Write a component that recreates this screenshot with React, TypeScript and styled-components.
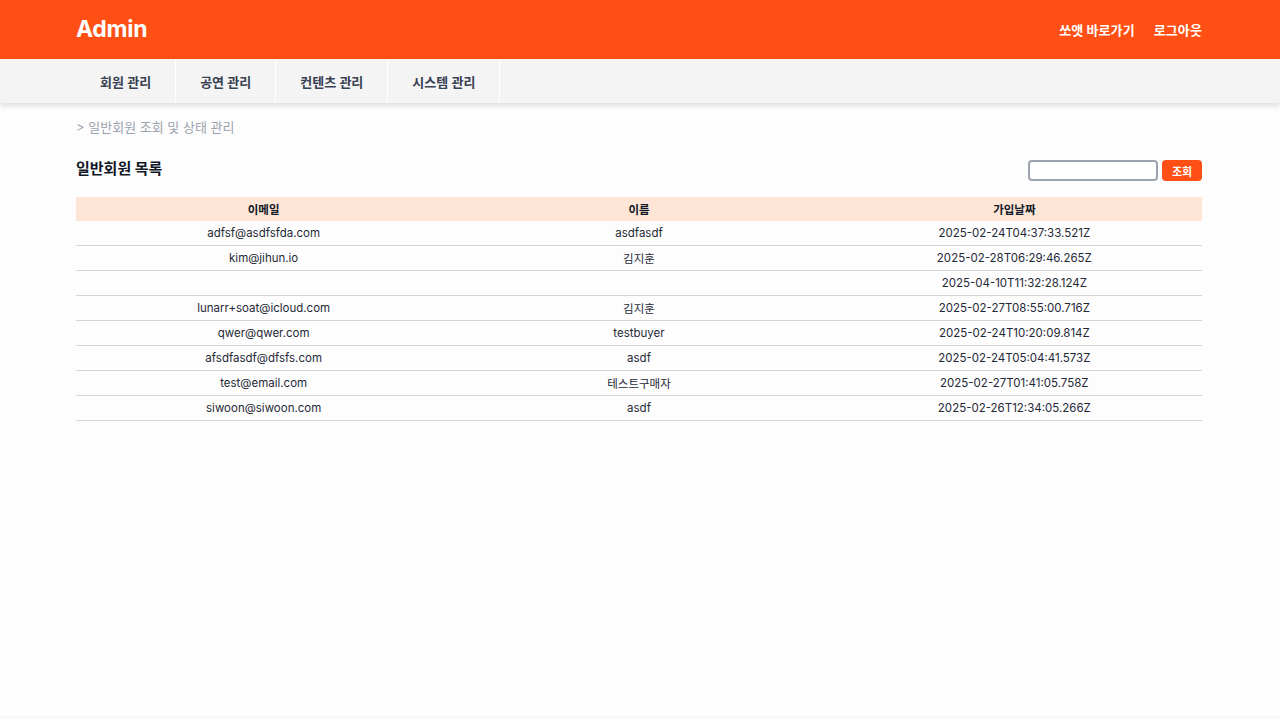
import React from "react"
import styled, { createGlobalStyle } from "styled-components"

const GlobalStyle = createGlobalStyle`
  html, body {
    margin: 0;
    padding: 0;
    background: #fdfdfd;
    font-family: Inter, "Noto Sans CJK KR", sans-serif;
    color: #111827;
  }
  * {
    box-sizing: border-box;
  }
`

const Page = styled.div`
  min-height: 718px;
  background: #fdfdfd;
  border-bottom: 2px solid #f5f8fb;
`

const Header = styled.header`
  height: 59px;
  background: #ff4f14;
`

const Container = styled.div`
  width: 1126px;
  margin: 0 78px 0 76px;
`

const HeaderInner = styled(Container)`
  height: 100%;
  display: flex;
  align-items: center;
  justify-content: space-between;
`

const Logo = styled.h1`
  margin: 0;
  font-size: 23px;
  font-weight: 700;
  color: #fff;
  letter-spacing: -0.3px;
  position: relative;
  top: -1px;
`

const HeaderLinks = styled.div`
  display: flex;
  gap: 19px;
`

const HeaderLink = styled.a`
  font-size: 13px;
  font-weight: 700;
  color: #fff;
  letter-spacing: 0.1px;
  text-decoration: none;
`

const NavBar = styled.nav`
  height: 44px;
  background: #f4f4f4;
  box-shadow: 0 3px 5px rgba(0, 0, 0, 0.12);
`

const NavList = styled(Container)`
  display: flex;
  height: 100%;
`

const NavItem = styled.a`
  display: flex;
  align-items: center;
  padding: 0 24px;
  height: 100%;
  font-size: 13px;
  font-weight: 600;
  color: #374151;
  border-right: 1px solid #ffffff;
  text-decoration: none;
`

const Main = styled(Container)`
  padding-top: 14px;
`

const Breadcrumb = styled.p`
  margin: 0;
  font-size: 13px;
  line-height: 20px;
  color: #9ca3af;
`

const TitleRow = styled.div`
  display: flex;
  align-items: center;
  justify-content: space-between;
  margin-top: 23px;
`

const Title = styled.h2`
  margin: 0;
  font-size: 15px;
  font-weight: 700;
  color: #111827;
  line-height: 18px;
  position: relative;
  top: -2px;
`

const Search = styled.div`
  display: flex;
  gap: 4px;
`

const SearchInput = styled.input`
  width: 130px;
  height: 21px;
  border: 2px solid #9ca3af;
  border-radius: 4px;
  background: #fff;
  padding: 0 4px;
  font-size: 12px;
  outline: none;
`

const SearchButton = styled.button`
  width: 40px;
  height: 21px;
  border: none;
  border-radius: 4px;
  background: #ff4f14;
  color: #fff;
  font-family: inherit;
  font-size: 11px;
  font-weight: 600;
  padding: 0;
`

const Table = styled.table`
  width: 100%;
  margin-top: 16px;
  border-collapse: separate;
  border-spacing: 0;
  table-layout: fixed;
  font-size: 11.5px;
`

const HeadCell = styled.th`
  height: 24px;
  background: #fee5d5;
  font-weight: 700;
  color: #111827;
  text-align: center;
  padding: 0;
`

const Cell = styled.td`
  height: 25px;
  text-align: center;
  color: #1f2937;
  padding: 0;
  border-bottom: 1px solid #d1d5db;
`

const members = [
  { email: "adfsf@asdfsfda.com", name: "asdfasdf", joined: "2025-02-24T04:37:33.521Z" },
  { email: "kim@jihun.io", name: "김지훈", joined: "2025-02-28T06:29:46.265Z" },
  { email: "", name: "", joined: "2025-04-10T11:32:28.124Z" },
  { email: "lunarr+soat@icloud.com", name: "김지훈", joined: "2025-02-27T08:55:00.716Z" },
  { email: "qwer@qwer.com", name: "testbuyer", joined: "2025-02-24T10:20:09.814Z" },
  { email: "afsdfasdf@dfsfs.com", name: "asdf", joined: "2025-02-24T05:04:41.573Z" },
  { email: "test@email.com", name: "테스트구매자", joined: "2025-02-27T01:41:05.758Z" },
  { email: "siwoon@siwoon.com", name: "asdf", joined: "2025-02-26T12:34:05.266Z" },
]

const App = () => (
  <Page>
    <GlobalStyle />
    <Header>
      <HeaderInner>
        <Logo>Admin</Logo>
        <HeaderLinks>
          <HeaderLink>쏘앳 바로가기</HeaderLink>
          <HeaderLink>로그아웃</HeaderLink>
        </HeaderLinks>
      </HeaderInner>
    </Header>
    <NavBar>
      <NavList>
        <NavItem>회원 관리</NavItem>
        <NavItem>공연 관리</NavItem>
        <NavItem>컨텐츠 관리</NavItem>
        <NavItem>시스템 관리</NavItem>
      </NavList>
    </NavBar>
    <Main>
      <Breadcrumb>&gt; 일반회원 조회 및 상태 관리</Breadcrumb>
      <TitleRow>
        <Title>일반회원 목록</Title>
        <Search>
          <SearchInput />
          <SearchButton>조회</SearchButton>
        </Search>
      </TitleRow>
      <Table>
        <thead>
          <tr>
            <HeadCell>이메일</HeadCell>
            <HeadCell>이름</HeadCell>
            <HeadCell>가입날짜</HeadCell>
          </tr>
        </thead>
        <tbody>
          {members.map((m, i) => (
            <tr key={i}>
              <Cell>{m.email}</Cell>
              <Cell>{m.name}</Cell>
              <Cell>{m.joined}</Cell>
            </tr>
          ))}
        </tbody>
      </Table>
    </Main>
  </Page>
)

export default App
